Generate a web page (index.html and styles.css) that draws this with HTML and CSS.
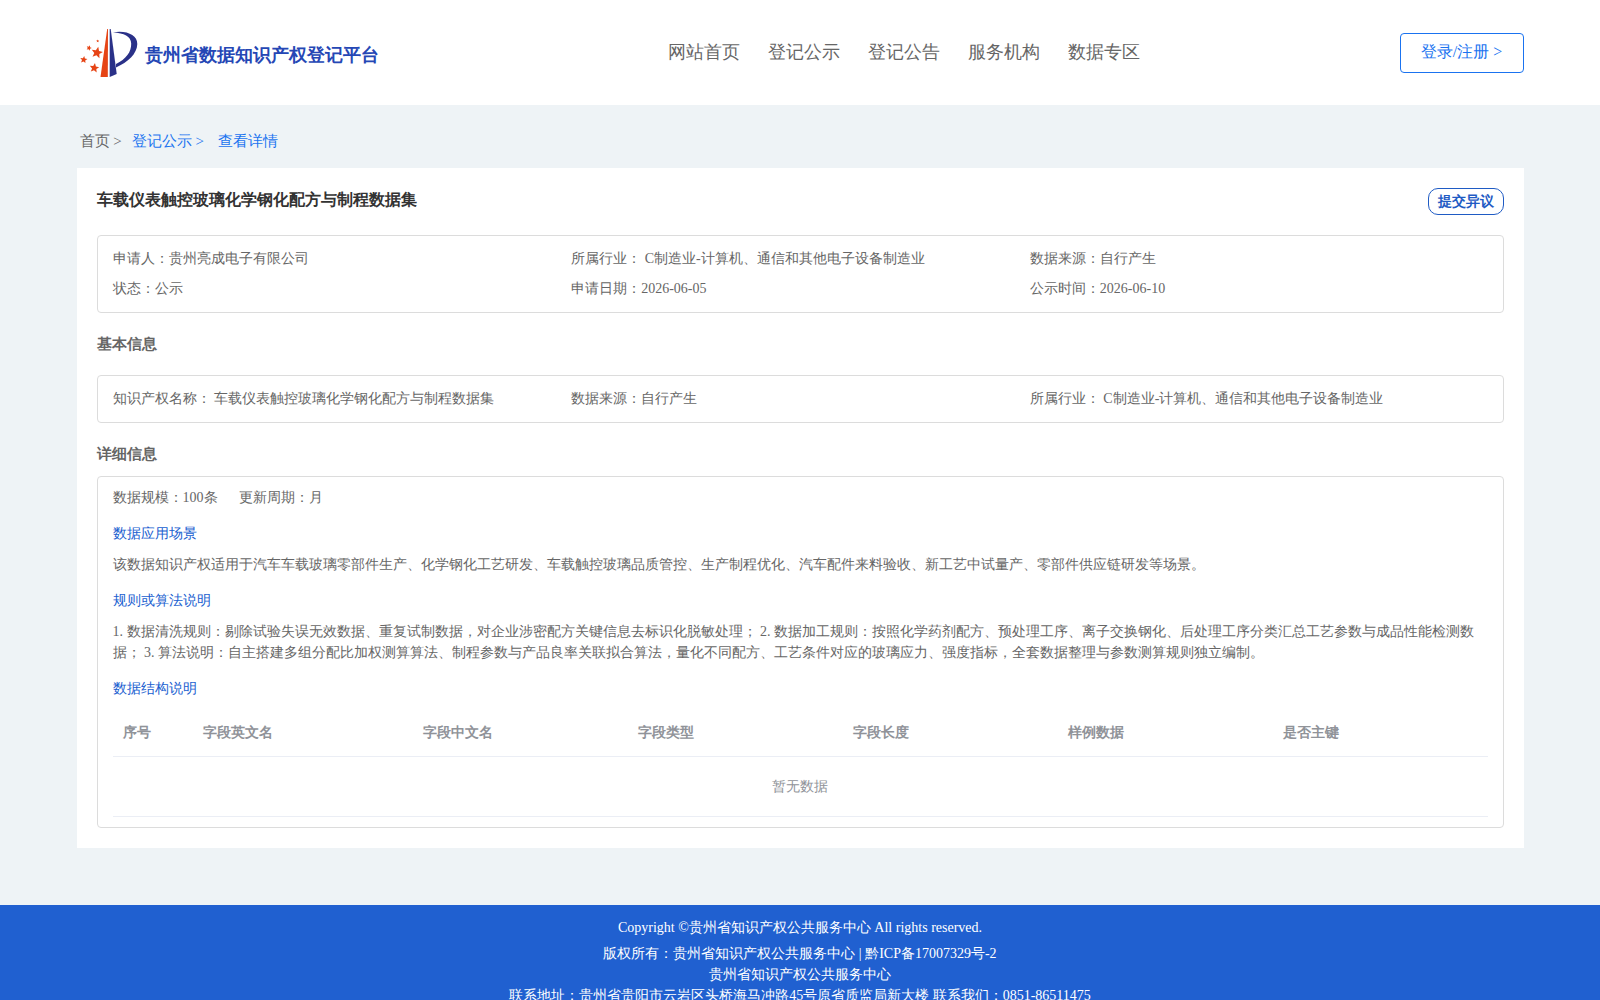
FILE: index.html
```html
<!DOCTYPE html>
<html lang="en">
<head>
    <meta charset="UTF-8">
    <meta name="viewport" content="width=device-width, initial-scale=1.0">
    <title>贵州省数据知识产权登记平台</title>
    <link rel="stylesheet" href="styles.css">
</head>
<body>
    <header class="header">
        <div class="container header-inner">
            <a class="logo" href="#">
                <svg class="logo-icon" viewBox="0 0 58 50" aria-hidden="true">
                    <defs>
                        <polygon id="star" points="0,-1 .27,-.36 .95,-.31 .43,.14 .59,.81 0,.45 -.59,.81 -.43,.14 -.95,-.31 -.27,-.36"/>
                    </defs>
                    <g fill="#e64415">
                        <path d="M27.2 1h.8l-.2 48h-7.3z"/>
                        <use href="#star" transform="translate(17 24.7) rotate(12) scale(6)"/>
                        <use href="#star" transform="translate(14.3 40) rotate(8) scale(5)"/>
                        <use href="#star" transform="translate(3.7 31.7) rotate(8) scale(3.8)"/>
                        <use href="#star" transform="translate(9 20) rotate(20) scale(2.8)"/>
                        <use href="#star" transform="translate(17.7 13) scale(1.6)"/>
                    </g>
                    <g fill="#2a3188">
                        <path d="M29.7 1h1l6 45-7 3z"/>
                        <path d="M33 4.5C46 2 57.5 7 57.3 16C57 26 48 34 36 39.5V36C46 31 51.5 24 51.2 15.500C51 8 44 5.200 33 4.500z"/>
                    </g>
                </svg>
                <span class="logo-text">贵州省数据知识产权登记平台</span>
            </a>
            <nav class="nav">
                <a href="#">网站首页</a>
                <a href="#">登记公示</a>
                <a href="#">登记公告</a>
                <a href="#">服务机构</a>
                <a href="#">数据专区</a>
            </nav>
            <button type="button" class="login-btn">登录/注册 &gt;</button>
        </div>
    </header>

    <main class="container">
        <div class="breadcrumb">
            <a href="#">首页 &gt;</a>
            <a class="active" href="#">登记公示 &gt;</a>
            <a class="active current" href="#">查看详情</a>
        </div>

        <div class="card">
            <div class="card-head">
                <h1>车载仪表触控玻璃化学钢化配方与制程数据集</h1>
                <button type="button" class="objection-btn">提交异议</button>
            </div>

            <ul class="box info-list">
                <li>申请人：贵州亮成电子有限公司</li>
                <li>所属行业： C制造业-计算机、通信和其他电子设备制造业</li>
                <li>数据来源：自行产生</li>
                <li>状态：公示</li>
                <li>申请日期：2026-06-05</li>
                <li>公示时间：2026-06-10</li>
            </ul>

            <h2 class="base-title">基本信息</h2>
            <ul class="box info-list">
                <li>知识产权名称： 车载仪表触控玻璃化学钢化配方与制程数据集</li>
                <li>数据来源：自行产生</li>
                <li>所属行业： C制造业-计算机、通信和其他电子设备制造业</li>
            </ul>

            <h2>详细信息</h2>
            <div class="box detail">
                <p class="scale"><span>数据规模：100条</span><span>更新周期：月</span></p>
                <h3>数据应用场景</h3>
                <p>该数据知识产权适用于汽车车载玻璃零部件生产、化学钢化工艺研发、车载触控玻璃品质管控、生产制程优化、汽车配件来料验收、新工艺中试量产、零部件供应链研发等场景。</p>
                <h3>规则或算法说明</h3>
                <p>1. 数据清洗规则：剔除试验失误无效数据、重复试制数据，对企业涉密配方关键信息去标识化脱敏处理； 2. 数据加工规则：按照化学药剂配方、预处理工序、离子交换钢化、后处理工序分类汇总工艺参数与成品性能检测数据； 3. 算法说明：自主搭建多组分配比加权测算算法、制程参数与产品良率关联拟合算法，量化不同配方、工艺条件对应的玻璃应力、强度指标，全套数据整理与参数测算规则独立编制。</p>
                <h3>数据结构说明</h3>
                <table class="table">
                    <thead>
                        <tr>
                            <th class="col-index">序号</th>
                            <th class="col-name">字段英文名</th>
                            <th>字段中文名</th>
                            <th>字段类型</th>
                            <th>字段长度</th>
                            <th>样例数据</th>
                            <th>是否主键</th>
                        </tr>
                    </thead>
                    <tbody>
                        <tr>
                            <td class="empty" colspan="7">暂无数据</td>
                        </tr>
                    </tbody>
                </table>
            </div>
        </div>
    </main>

    <footer class="footer">
        <p class="copyright">Copyright ©贵州省知识产权公共服务中心 All rights reserved.</p>
        <p>版权所有：贵州省知识产权公共服务中心 | 黔ICP备17007329号-2</p>
        <p>贵州省知识产权公共服务中心</p>
        <p>联系地址：贵州省贵阳市云岩区头桥海马冲路45号原省质监局新大楼 联系我们：0851-86511475</p>
    </footer>
</body>
</html>
```
FILE: styles.css
```css
* {
    box-sizing: border-box;
    margin: 0;
    padding: 0;
}

body {
    background-color: #eef3f6;
    color: #666;
    font-family: "Liberation Serif", serif;
    font-size: 14px;
    line-height: 21px;
}

a {
    color: inherit;
    text-decoration: none;
}

ul {
    list-style: none;
}

button {
    background-color: #fff;
    font-family: inherit;
    cursor: pointer;
}

.container {
    width: calc(100% - 153px);
    margin: 0 auto;
}

/* header */
.header {
    background-color: #fff;
}

.header-inner {
    display: flex;
    justify-content: space-between;
    align-items: center;
    height: 105px;
}

.logo {
    display: flex;
    align-items: center;
    gap: 7px;
    padding-left: 3px;
}

.logo-icon {
    width: 58px;
    height: 50px;
}

.logo-text {
    padding-top: 4px;
    color: #2547b5;
    font-size: 18px;
    font-weight: bold;
    line-height: 24px;
}

.nav {
    display: flex;
    flex: 1;
    gap: 28px;
    padding-left: 289px;
    font-size: 18px;
}

.login-btn {
    width: 124px;
    height: 40px;
    border: 1px solid #1a73f0;
    border-radius: 4px;
    color: #1a73f0;
    font-size: 16px;
}

/* breadcrumb */
.breadcrumb {
    display: flex;
    gap: 10px;
    padding: 23px 3px 13px;
    font-size: 15px;
    line-height: 27px;
}

.breadcrumb .active {
    color: #1a73f0;
}

.breadcrumb .current {
    margin-left: 4px;
}

/* card */
.card {
    padding: 20px;
    background-color: #fff;
}

.card-head {
    display: flex;
    justify-content: space-between;
    align-items: flex-start;
    margin-bottom: 20px;
}

h1 {
    color: #333;
    font-size: 16px;
    line-height: 24px;
}

h2 {
    padding: 20px 0 10px;
    font-size: 15px;
    line-height: 23px;
}

.base-title {
    padding-bottom: 19px;
}

.objection-btn {
    width: 76px;
    height: 27px;
    border: 1px solid #1f5bc4;
    border-radius: 10px;
    color: #1f5bc4;
    font-size: 14px;
    font-weight: bold;
}

.box {
    padding: 8px 15px;
    border: 1px solid #dcdcdc;
    border-radius: 4px;
}

.info-list {
    display: grid;
    grid-template-columns: repeat(3, 1fr);
    column-gap: 1px;
    line-height: 30px;
}

.detail {
    padding: 10px 15px;
}

.scale {
    display: flex;
    gap: 21px;
}

h3 {
    margin: 15px 0 10px;
    color: #2060d0;
    font-size: 14px;
    font-weight: normal;
}

/* table */
.table {
    width: 100%;
    border-collapse: collapse;
    table-layout: fixed;
    color: #909399;
}

.table th {
    height: 47px;
    padding: 0 10px;
    border-bottom: 1px solid #ebeef5;
    text-align: left;
}

.table .col-index {
    width: 80px;
}

.table .col-name {
    width: 220px;
}

.table .empty {
    height: 60px;
    border-bottom: 1px solid #ebeef5;
    text-align: center;
}

/* footer */
.footer {
    margin-top: 57px;
    padding: 12px 0 20px;
    background-color: #2060d0;
    color: #fff;
    text-align: center;
}

.copyright {
    margin-bottom: 5px;
}
```
